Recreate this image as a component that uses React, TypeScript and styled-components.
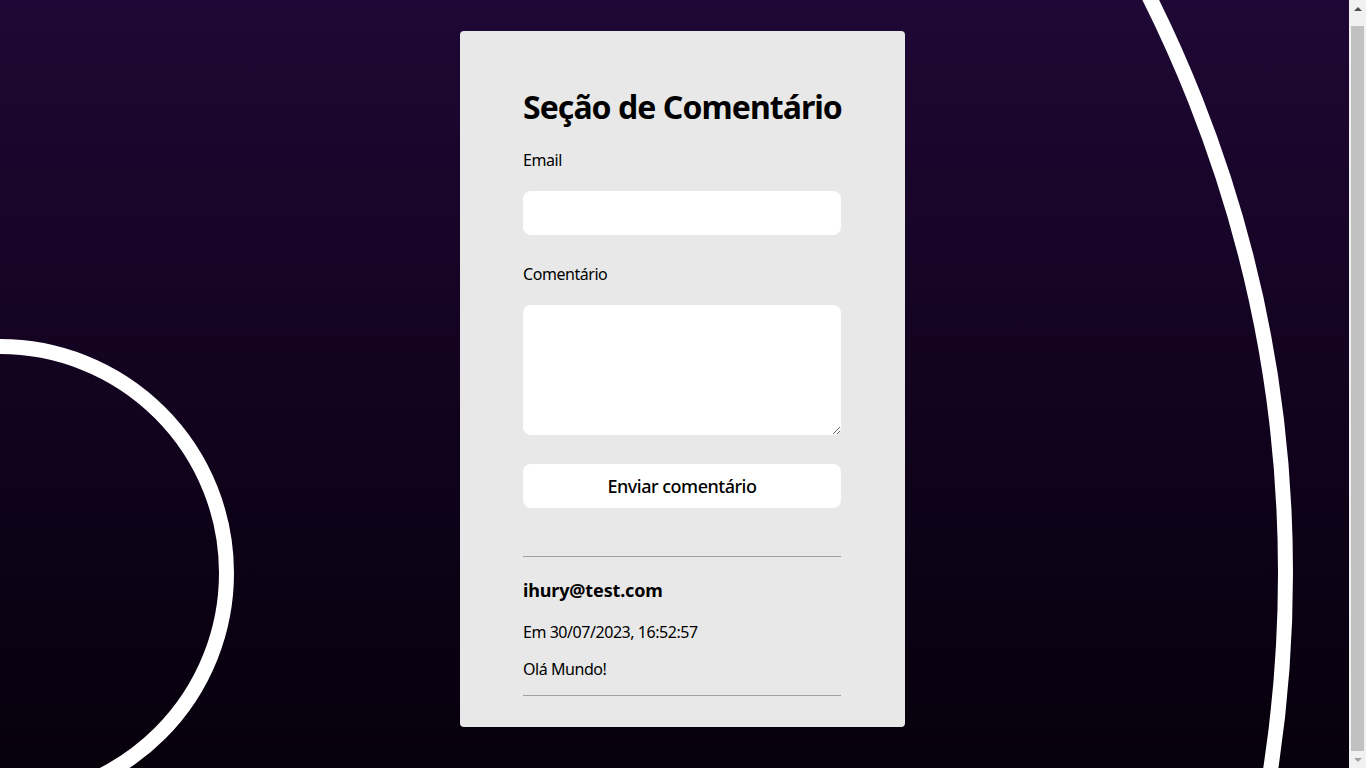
import React from "react";
import styled, { createGlobalStyle } from "styled-components";

const GlobalStyle = createGlobalStyle`
  html, body {
    margin: 0;
    padding: 0;
  }
  body {
    font-family: "Noto Sans", "Open Sans", sans-serif;
    color: #000;
    background: linear-gradient(180deg, #1f0835 0%, #12031f 50%, #06000b 100%);
    background-attachment: fixed;
    min-height: 100vh;
  }
`;

const Backdrop = styled.svg`
  position: fixed;
  top: 0;
  left: 0;
  width: 100%;
  height: 100vh;
  pointer-events: none;
  z-index: 0;
`;

const ScrollRail = styled.div`
  position: fixed;
  top: 0;
  right: 0;
  width: 17px;
  height: 100vh;
  background: #f1f1f1;
  z-index: 2;
  display: flex;
  flex-direction: column;
  align-items: center;
`;

const ScrollArrow = styled.div<{ $down?: boolean; $color: string }>`
  height: 17px;
  width: 100%;
  display: flex;
  align-items: center;
  justify-content: center;
  flex-shrink: 0;
  &::before {
    content: "";
    width: 0;
    height: 0;
    border-left: 4px solid transparent;
    border-right: 4px solid transparent;
    ${(p) =>
      p.$down
        ? `border-top: 4px solid ${p.$color};`
        : `border-bottom: 4px solid ${p.$color};`}
  }
`;

const ScrollThumb = styled.div`
  flex: 1;
  width: 13px;
  margin: 9px 0 0;
  background: #c1c1c1;
`;

const Page = styled.main`
  position: relative;
  z-index: 1;
  display: flex;
  justify-content: center;
  padding: 31px 1px 50px 0;
`;

const Card = styled.section`
  width: 445px;
  box-sizing: border-box;
  background: #e8e8e8;
  border-radius: 4px;
  padding: 56px 64px 31px 63px;
  display: flex;
  flex-direction: column;
`;

const Title = styled.h1`
  margin: 0;
  font-size: 32px;
  line-height: 40px;
  font-weight: 700;
  letter-spacing: -0.95px;
  white-space: nowrap;
`;

const Form = styled.form`
  display: flex;
  flex-direction: column;
`;

const Label = styled.label<{ $top: number }>`
  margin-top: ${(p) => p.$top}px;
  font-size: 16px;
  line-height: 20px;
  letter-spacing: -0.45px;
`;

const Input = styled.input`
  margin-top: 21px;
  height: 44px;
  box-sizing: border-box;
  border: none;
  border-radius: 8px;
  background: #fff;
  padding: 0 12px;
  font: inherit;
  outline: none;
`;

const TextArea = styled.textarea`
  margin-top: 21px;
  height: 130px;
  box-sizing: border-box;
  border: none;
  border-radius: 8px;
  background: #fff;
  padding: 8px 12px;
  font: inherit;
  outline: none;
  resize: both;
`;

const SubmitButton = styled.button`
  margin-top: 29px;
  height: 44px;
  border: none;
  border-radius: 8px;
  background: #fff;
  font-family: inherit;
  font-size: 18px;
  font-weight: 500;
  letter-spacing: -0.5px;
  color: #000;
  cursor: pointer;
`;

const Divider = styled.hr<{ $top: number }>`
  margin: ${(p) => p.$top}px 0 0;
  border: none;
  border-top: 1px solid #a0a0a0;
  height: 0;
`;

const CommentList = styled.ul`
  list-style: none;
  margin: 0;
  padding: 0;
  display: flex;
  flex-direction: column;
`;

const Comment = styled.li`
  display: flex;
  flex-direction: column;
`;

const Author = styled.h2`
  margin: 21px 0 0;
  font-size: 18px;
  line-height: 24px;
  font-weight: 700;
  letter-spacing: -0.15px;
`;

const Meta = styled.p<{ $top: number }>`
  margin: ${(p) => p.$top}px 0 0;
  font-size: 16px;
  line-height: 20px;
  letter-spacing: -0.45px;
`;

export default function App() {
  return (
    <>
      <GlobalStyle />
      <Backdrop>
        <circle cx="0" cy="573" r="226.5" fill="none" stroke="#fff" strokeWidth="15" />
        <circle cx="0" cy="573" r="1285.5" fill="none" stroke="#fff" strokeWidth="15" />
      </Backdrop>
      <ScrollRail aria-hidden="true">
        <ScrollArrow $color="#505050" />
        <ScrollThumb />
        <ScrollArrow $down $color="#a3a3a3" />
      </ScrollRail>
      <Page>
        <Card>
          <Title>Seção de Comentário</Title>
          <Form onSubmit={(e) => e.preventDefault()}>
            <Label $top={23} htmlFor="email">Email</Label>
            <Input id="email" type="email" />
            <Label $top={29} htmlFor="comment">Comentário</Label>
            <TextArea id="comment" />
            <SubmitButton type="submit">Enviar comentário</SubmitButton>
          </Form>
          <Divider $top={48} />
          <CommentList>
            <Comment>
              <Author>ihury@test.com</Author>
              <Meta $top={20}>Em 30/07/2023, 16:52:57</Meta>
              <Meta $top={17}>Olá Mundo!</Meta>
              <Divider $top={16} />
            </Comment>
          </CommentList>
        </Card>
      </Page>
    </>
  );
}
